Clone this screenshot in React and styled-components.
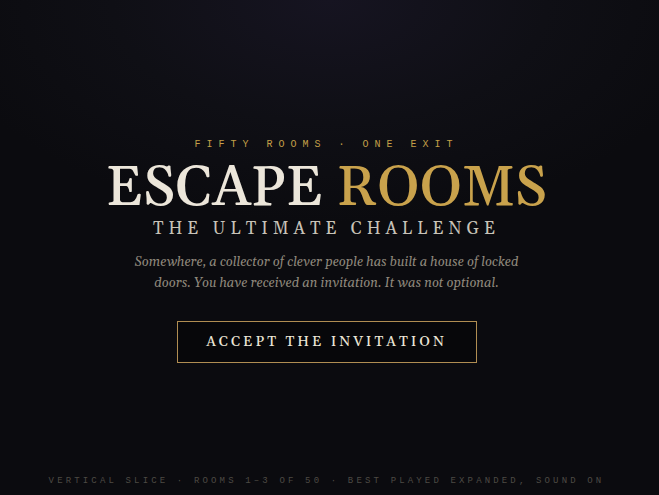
import React from "react";
import styled, { createGlobalStyle } from "styled-components";

const GlobalStyle = createGlobalStyle`
  html, body {
    margin: 0;
    padding: 0;
    background: #0b0b0f;
  }
  * { box-sizing: border-box; }
`;

const Page = styled.div`
  min-height: 100vh;
  display: flex;
  flex-direction: column;
  padding-right: 6px;
  background: radial-gradient(ellipse 60% 45% at 50% 0%, #161421 0%, #0f0f15 55%, #0b0b0f 100%);
  font-family: "Gelasio", Georgia, "Liberation Serif", serif;
`;

const Main = styled.main`
  flex: 1;
  display: flex;
  flex-direction: column;
  align-items: center;
  justify-content: center;
  padding-top: 25px;
  text-align: center;
`;

const Eyebrow = styled.div`
  font-family: "Liberation Mono", monospace;
  font-size: 10px;
  letter-spacing: 6px;
  color: #c4a048;
`;

const Title = styled.h1`
  margin: 9px 0 0;
  font-family: "Gelasio", Georgia, serif;
  font-weight: 500;
  font-size: 56px;
  line-height: 60px;
  color: #ece6da;
`;

const Gold = styled.span`
  color: #c9a24c;
`;

const Subtitle = styled.div`
  margin-top: 2px;
  font-size: 17px;
  line-height: 17px;
  letter-spacing: 5px;
  color: #c8c3b8;
`;

const Blurb = styled.p`
  margin: 14px 0 0;
  max-width: 400px;
  font-style: italic;
  font-size: 13px;
  line-height: 21px;
  color: #8f887c;
`;

const Button = styled.button`
  margin-top: 27px;
  width: 300px;
  height: 42px;
  background: #07070a;
  border: 1px solid #b08d52;
  color: #ebe5d6;
  font-family: "Gelasio", Georgia, serif;
  font-size: 14px;
  font-weight: 500;
  letter-spacing: 3px;
  cursor: pointer;
`;

const Footer = styled.footer`
  padding: 0 0 9px;
  text-align: center;
  font-family: "Liberation Mono", monospace;
  font-size: 9px;
  letter-spacing: 3.15px;
  color: #4d4a44;
`;

export default function App() {
  return (
    <>
      <GlobalStyle />
      <Page>
        <Main>
          <Eyebrow>FIFTY ROOMS · ONE EXIT</Eyebrow>
          <Title>
            ESCAPE <Gold>ROOMS</Gold>
          </Title>
          <Subtitle>THE ULTIMATE CHALLENGE</Subtitle>
          <Blurb>
            Somewhere, a collector of clever people has built a house of locked
            doors. You have received an invitation. It was not optional.
          </Blurb>
          <Button>ACCEPT THE INVITATION</Button>
        </Main>
        <Footer>VERTICAL SLICE · ROOMS 1–3 OF 50 · BEST PLAYED EXPANDED, SOUND ON</Footer>
      </Page>
    </>
  );
}
